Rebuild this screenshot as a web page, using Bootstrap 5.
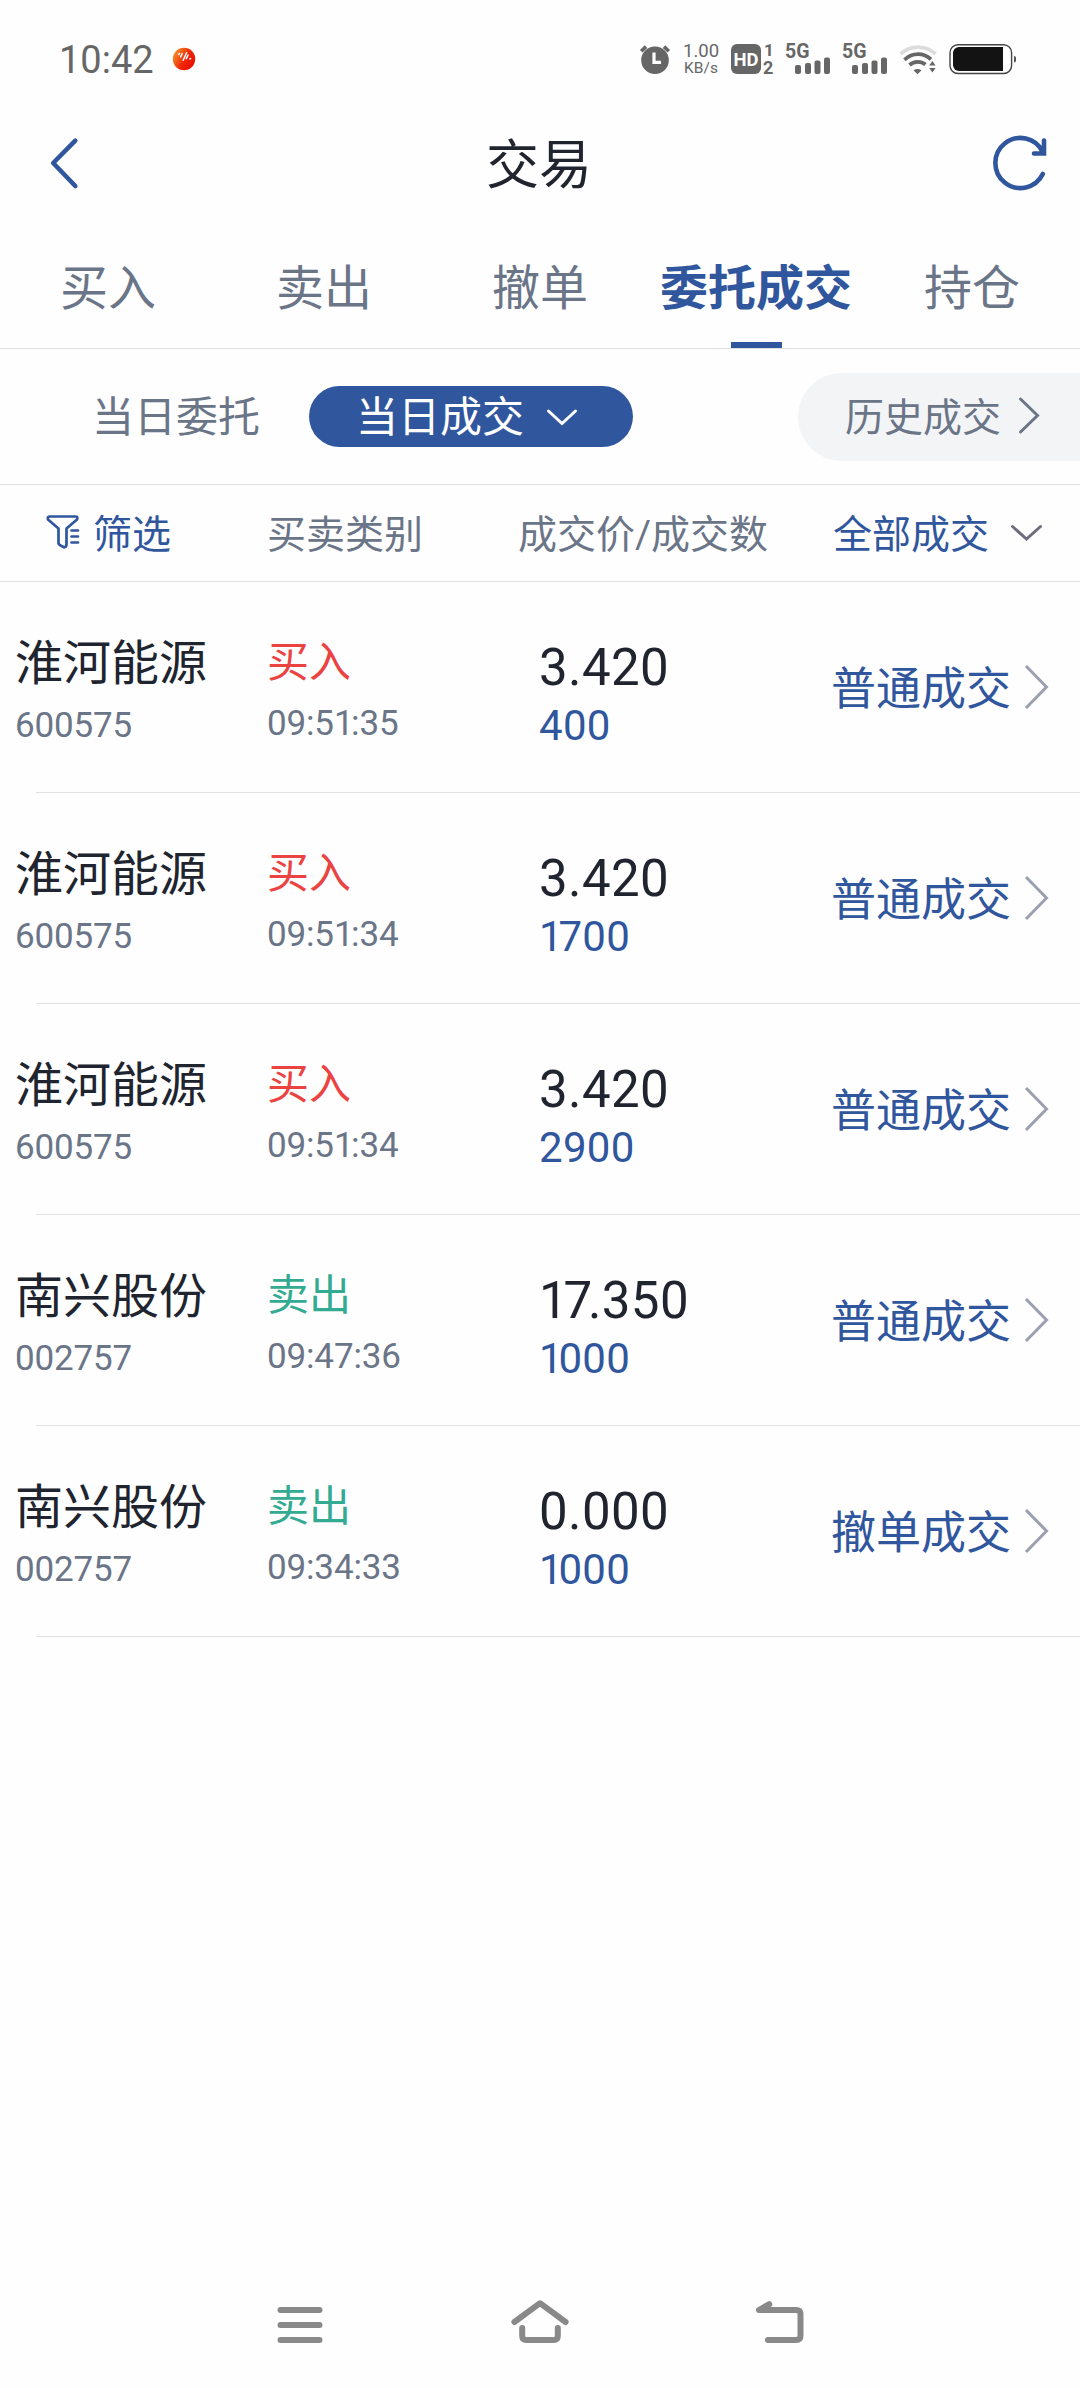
<!DOCTYPE html>
<html lang="zh-CN">
<head>
<meta charset="utf-8">
<meta name="viewport" content="width=device-width, initial-scale=1">
<title>交易</title>
<link rel="stylesheet" href="https://cdn.jsdelivr.net/npm/bootstrap@5.3.0/dist/css/bootstrap.min.css">
<style>
  :root { --brand: #30569d; --ink: #20242f; --slate: #6b7588; --rule: #e0e1e3; }
  body { font-family: Roboto, "Noto Sans CJK SC", sans-serif; background: #fefefe; color: var(--ink); width: 1080px; height: 2388px; overflow: hidden; }
  svg { display: block; flex: none; overflow: visible; }
  .brand-ink { color: var(--brand); }
  .slate-ink { color: var(--slate); }
  .rise { color: #eb4242; }
  .fall { color: #33ab92; }

  .statusbar { height: 118px; padding-left: 59px; color: #666; }
  .clock { font-size: 38px; line-height: 44px; width: 113px; padding-top: 1px; }
  .net-rate { width: 36px; margin-left: 13px; }
  .rate-num { font-size: 18.5px; line-height: 17px; }
  .rate-unit { font-size: 15.5px; line-height: 16px; }
  .gap-hd { margin-left: 12px; }
  .gap-sim { margin-left: 10px; }
  .gap-cell { margin-left: 11px; }
  .battery { margin: 0 63px 0 12px; }

  .titlebar { height: 92px; padding: 0 30px 0 48px; }
  .titlebar h1 { font-size: 53px; line-height: 60px; font-weight: 400; padding-top: 3px; }

  .tabs { height: 139px; border-bottom: 1px solid var(--rule); }
  .tabs .nav-link { width: 216px; height: 138px; padding: 51px 0 0; font-size: 48px; line-height: 56px; color: var(--slate); text-align: center; white-space: nowrap; border-radius: 0; }
  .tabs .nav-link.active { color: var(--brand); font-weight: 700; }
  .tabs .nav-link.active::after { content: ""; display: block; width: 51px; height: 6px; margin: 25px auto 0; background: var(--brand); }

  .segments { height: 136px; padding-left: 92px; border-bottom: 1px solid var(--rule); font-size: 42px; }
  .segments span { padding-top: 2px; }
  .seg-on { width: 324px; height: 61px; margin-left: 49px; padding: 0 0 0 47px; background: var(--brand); color: #fff; line-height: 59px; }
  .seg-on svg { margin-left: 22px; }
  .seg-history { width: 282px; height: 88px; padding-left: 47px; background: #f3f4f6; font-size: 39px; border-radius: 44px 0 0 44px; }
  .seg-history span { padding-top: 4px; }
  .seg-history svg { margin-left: 16px; }

  .heads { height: 97px; border-bottom: 1px solid var(--rule); font-size: 39px; line-height: 48px; white-space: nowrap; padding-top: 4px; }
  .funnel { margin-left: 46px; margin-right: 13px; }
  .heads .drop { margin-left: 20px; }
  .c1 { width: 267px; flex: none; }
  .c2 { width: 272px; flex: none; }
  .c3 { width: 292px; flex: none; }
  .heads .c2 { width: 251px; }
  .heads .c3 { width: 315px; }

  .deal { height: 211px; padding-top: 52px; white-space: nowrap; background: linear-gradient(var(--rule), var(--rule)) 36px 100% / 1044px 1px no-repeat; }
  .deal .c1 { padding-left: 15px; }
  .big-line { line-height: 60px; }
  .low-line { line-height: 40px; margin-top: 12px; }
  .stock { font-size: 48px; }
  .digits { font-size: 35px; letter-spacing: -.15px; }
  .side { font-size: 42px; margin-top: -1px; }
  .c2 .low-line { margin-top: 11px; }
  .price { font-size: 51px; margin-top: 4px; letter-spacing: .4px; }
  .c3 .low-line { font-size: 42px; margin-top: 8px; letter-spacing: .3px; }
  .tight { letter-spacing: -4.2px; }
  .snug { letter-spacing: -2.5px; }
  .kind { font-size: 45px; line-height: 60px; height: 60px; margin-top: 26px; }
  .kind svg { margin: 3px 0 0 13px; }

  .sysnav { height: 126px; padding: 0 272px; }
</style>
<script src="https://cdn.jsdelivr.net/npm/bootstrap@5.3.0/dist/js/bootstrap.bundle.min.js"></script>
</head>
<body class="d-flex flex-column">

<header class="statusbar d-flex align-items-center">
  <div class="clock">10:42</div>
  <svg width="24" height="24" viewBox="0 0 24 24">
    <defs><linearGradient id="flame" x1="0" y1=".2" x2="1" y2=".8"><stop offset="0" stop-color="#f39a2b"/><stop offset=".55" stop-color="#f02608"/><stop offset="1" stop-color="#e80c00"/></linearGradient></defs>
    <circle cx="12" cy="12" r="11.2" fill="url(#flame)"/>
    <path d="M6.5 7.5l1-.9M8.600 9.800l1.600-3.200M11.200 13.200l3.400-7.400M14.300 11.600l1.800-3.600M17.800 12l.8-.4" stroke="#fff" stroke-width="1.5" stroke-linecap="round"/>
  </svg>
  <svg class="ms-auto" width="30" height="32" viewBox="0 0 30 32">
    <circle cx="15" cy="17.2" r="13.8" fill="#666"/>
    <path d="M1.2 8.2l4.8-4.6M28.8 8.2l-4.8-4.6" stroke="#666" stroke-width="3.6"/>
    <path d="M14 9.5v9.8h7" fill="none" stroke="#fff" stroke-width="3.2"/>
  </svg>
  <div class="net-rate text-center"><div class="rate-num">1.00</div><div class="rate-unit">KB/s</div></div>
  <svg class="gap-hd" width="44" height="32" viewBox="0 0 44 32" font-family="Roboto" font-weight="700">
    <rect x="0" y="1" width="30" height="30" rx="6" fill="#666"/>
    <text x="2.4" y="22.8" font-size="19" fill="#fff" textLength="25" lengthAdjust="spacingAndGlyphs">HD</text>
    <text x="33" y="13.2" font-size="17" fill="#666">1</text>
    <text x="32" y="31" font-size="18" fill="#666">2</text>
  </svg>
  <svg class="gap-sim" width="46" height="32" viewBox="0 0 46 32" fill="#666">
    <text x="0" y="15.3" font-family="Roboto" font-weight="700" font-size="19.5" textLength="24.5" lengthAdjust="spacingAndGlyphs">5G</text>
    <rect x="10" y="22" width="6" height="9" rx="2"/><rect x="20" y="20" width="6" height="11" rx="2"/><rect x="29.5" y="17.5" width="6" height="13.5" rx="2"/><rect x="39" y="14.5" width="6" height="16.5" rx="2"/>
  </svg>
  <svg class="gap-cell" width="46" height="32" viewBox="0 0 46 32" fill="#666">
    <text x="0" y="15.3" font-family="Roboto" font-weight="700" font-size="19.5" textLength="24.5" lengthAdjust="spacingAndGlyphs">5G</text>
    <rect x="10" y="22" width="6" height="9" rx="2"/><rect x="20" y="20" width="6" height="11" rx="2"/><rect x="29.5" y="17.5" width="6" height="13.5" rx="2"/><rect x="39" y="14.5" width="6" height="16.5" rx="2"/>
  </svg>
  <svg class="gap-cell" width="38" height="32" viewBox="0 0 38 32" fill="none" stroke-width="3.8">
    <path d="M1.5 11Q9.5 4.2 19 4.2T36.5 11" stroke="#dcdcdc"/>
    <path d="M5.5 16.8Q11.5 11.2 19 11.2T32 16.4" stroke="#666"/>
    <path d="M10.500 22Q14 18.800 18.500 18.800T26.500 21.600" stroke="#666"/>
    <path d="M14.500 27.200Q18.500 24.600 22.500 27.200L18.500 31.200z" fill="#666" stroke="none"/>
    <path d="M30.200 22.500l3.200-4.600 3.200 4.600zM30.200 25l3.200 4.600 3.200-4.600z" fill="#666" stroke="none"/>
  </svg>
  <svg class="battery" width="68" height="32" viewBox="0 0 68 32">
    <rect x="1" y="1.7" width="61.6" height="28.8" rx="8" fill="none" stroke="#444" stroke-width="1.4"/>
    <path d="M10 4h44v24H10a6 6 0 0 1-6-6V10a6 6 0 0 1 6-6z" fill="#131313"/>
    <path d="M65 13q2 0 2 2v2.500q0 2-2 2z" fill="#555"/>
  </svg>
</header>

<div class="titlebar d-flex align-items-center justify-content-between">
  <svg width="40" height="54" viewBox="0 0 40 54" fill="none" stroke="#30569d" stroke-width="4.6" stroke-linecap="round" stroke-linejoin="round"><path d="M27.300 3.600L5.200 26 27.300 49"/></svg>
  <h1 class="m-0">交易</h1>
  <svg width="60" height="60" viewBox="0 0 60 60" fill="none" stroke="#30569d" stroke-width="4.6" stroke-linecap="round"><path d="M52.800 40A25 25 0 1 1 52.800 18"/><path d="M54 6.500v13H44"/></svg>
</div>

<nav class="tabs nav flex-nowrap">
  <a class="nav-link">买入</a>
  <a class="nav-link">卖出</a>
  <a class="nav-link">撤单</a>
  <a class="nav-link active">委托成交</a>
  <a class="nav-link">持仓</a>
</nav>

<div class="segments d-flex align-items-center flex-nowrap slate-ink">
  <span>当日委托</span>
  <div class="seg-on rounded-pill d-flex align-items-center">
    <span>当日成交</span>
    <svg width="32" height="18" viewBox="0 0 32 18" fill="none" stroke="#fff" stroke-width="3" stroke-linecap="round"><path d="M2.500 3L16 15.500 29.500 3"/></svg>
  </div>
  <div class="seg-history ms-auto d-flex align-items-center">
    <span>历史成交</span>
    <svg width="24" height="40" viewBox="0 0 24 40" fill="none" stroke="#6b7588" stroke-width="3" stroke-linecap="round"><path d="M3.500 2L20.500 18.500 3.500 35"/></svg>
  </div>
</div>

<div class="heads d-flex align-items-center slate-ink">
  <div class="c1 d-flex align-items-center brand-ink">
    <svg class="funnel" width="34" height="36" viewBox="0 1 34 36" fill="none" stroke="#30569d" stroke-width="2.700" stroke-linecap="round" stroke-linejoin="round"><path d="M20.500 22V12.500L31 3.500Q32.200 .5 29.500 .5H4Q1 .5 2 3.500L12.500 12.500V27.500Q13 29 18 31.300 20.500 31.300 20.500 28V12.500M25.500 14.500h6.500M25.500 20.500h6.500M25.500 26.500h6.500"/></svg>
    <span>筛选</span>
  </div>
  <div class="c2">买卖类别</div>
  <div class="c3">成交价/成交数</div>
  <div class="brand-ink d-flex align-items-center">全部成交
    <svg class="drop" width="34" height="18" viewBox="0 1 34 18" fill="none" stroke="#6e6c7e" stroke-width="3" stroke-linecap="round"><path d="M3.500 1.500L17.500 14 31.500 1.500"/></svg>
  </div>
</div>

<main>
  <div class="deal d-flex">
    <div class="c1"><div class="stock big-line">淮河能源</div><div class="digits low-line slate-ink">600575</div></div>
    <div class="c2"><div class="side big-line rise">买入</div><div class="digits low-line slate-ink">09:5<span class="snug">1</span>:35</div></div>
    <div class="c3"><div class="price big-line">3.420</div><div class="low-line brand-ink">400</div></div>
    <div class="kind brand-ink d-flex">普通成交<svg width="26" height="48" viewBox="0 0 26 48" fill="none" stroke="#9aa0b0" stroke-width="3"><path d="M2 3L22.500 24 2 45"/></svg></div>
  </div>
  <div class="deal d-flex">
    <div class="c1"><div class="stock big-line">淮河能源</div><div class="digits low-line slate-ink">600575</div></div>
    <div class="c2"><div class="side big-line rise">买入</div><div class="digits low-line slate-ink">09:5<span class="snug">1</span>:34</div></div>
    <div class="c3"><div class="price big-line">3.420</div><div class="low-line brand-ink"><span class="tight">1</span>700</div></div>
    <div class="kind brand-ink d-flex">普通成交<svg width="26" height="48" viewBox="0 0 26 48" fill="none" stroke="#9aa0b0" stroke-width="3"><path d="M2 3L22.500 24 2 45"/></svg></div>
  </div>
  <div class="deal d-flex">
    <div class="c1"><div class="stock big-line">淮河能源</div><div class="digits low-line slate-ink">600575</div></div>
    <div class="c2"><div class="side big-line rise">买入</div><div class="digits low-line slate-ink">09:5<span class="snug">1</span>:34</div></div>
    <div class="c3"><div class="price big-line">3.420</div><div class="low-line brand-ink">2900</div></div>
    <div class="kind brand-ink d-flex">普通成交<svg width="26" height="48" viewBox="0 0 26 48" fill="none" stroke="#9aa0b0" stroke-width="3"><path d="M2 3L22.500 24 2 45"/></svg></div>
  </div>
  <div class="deal d-flex">
    <div class="c1"><div class="stock big-line">南兴股份</div><div class="digits low-line slate-ink">002757</div></div>
    <div class="c2"><div class="side big-line fall">卖出</div><div class="digits low-line slate-ink">09:47:36</div></div>
    <div class="c3"><div class="price big-line"><span class="tight">17</span>.350</div><div class="low-line brand-ink"><span class="tight">1</span>000</div></div>
    <div class="kind brand-ink d-flex">普通成交<svg width="26" height="48" viewBox="0 0 26 48" fill="none" stroke="#9aa0b0" stroke-width="3"><path d="M2 3L22.500 24 2 45"/></svg></div>
  </div>
  <div class="deal d-flex">
    <div class="c1"><div class="stock big-line">南兴股份</div><div class="digits low-line slate-ink">002757</div></div>
    <div class="c2"><div class="side big-line fall">卖出</div><div class="digits low-line slate-ink">09:34:33</div></div>
    <div class="c3"><div class="price big-line">0.000</div><div class="low-line brand-ink"><span class="tight">1</span>000</div></div>
    <div class="kind brand-ink d-flex">撤单成交<svg width="26" height="48" viewBox="0 0 26 48" fill="none" stroke="#9aa0b0" stroke-width="3"><path d="M2 3L22.500 24 2 45"/></svg></div>
  </div>
</main>

<footer class="sysnav mt-auto d-flex align-items-center justify-content-between">
  <svg width="56" height="50" viewBox="0 0 56 50" fill="none" stroke="#898989" stroke-width="6" stroke-linecap="round"><path d="M8.500 10h39M8.500 25h39M8.500 40h39"/></svg>
  <svg width="60" height="50" viewBox="0 0 60 50" fill="none" stroke="#898989" stroke-width="6" stroke-linecap="round" stroke-linejoin="round"><path d="M4.400 22L30 3.200 55.600 22M12.200 28v8q0 4 4 4h27.600q4 0 4-4v-8"/></svg>
  <svg width="56" height="50" viewBox="0 0 56 50" fill="none" stroke="#898989" stroke-width="6" stroke-linecap="round" stroke-linejoin="round"><path d="M17.300 4.200L7 10h37q4.500 0 4.500 4v22q0 4-4.500 4H16"/></svg>
</footer>
</body>
</html>
